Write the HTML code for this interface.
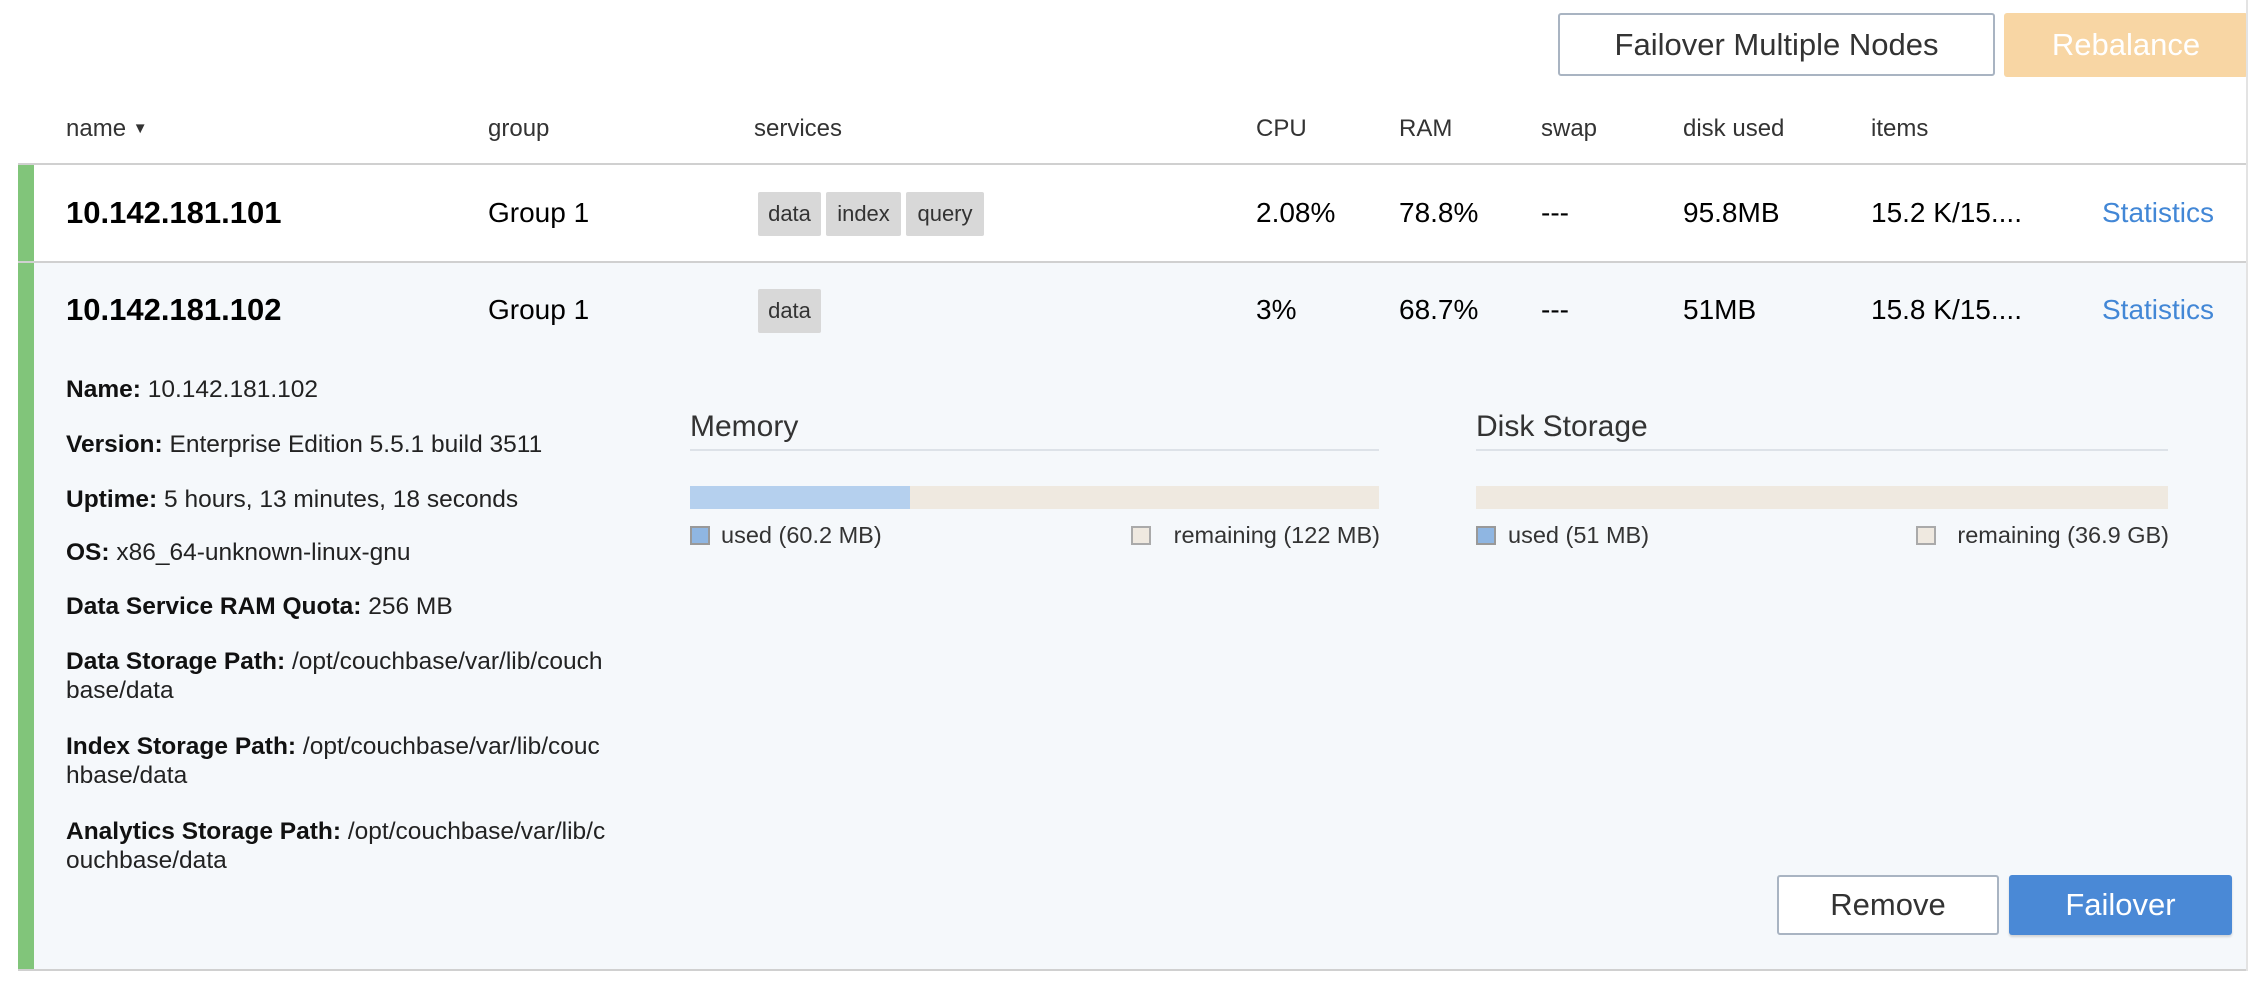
<!DOCTYPE html>
<html><head><meta charset="utf-8"><style>
*{margin:0;padding:0;box-sizing:border-box}
body{width:2253px;height:984px;background:#fff;font-family:"Liberation Sans",sans-serif;color:#000;position:relative;overflow:hidden}
.a{position:absolute;white-space:nowrap}
.h{font-size:24px;color:#333;top:114px;line-height:30px}
.c{font-size:28px;line-height:34px}
.ip{font-size:31px;font-weight:bold;line-height:36px}
.tag{position:absolute;background:#d8d8d8;border-radius:2px;font-size:22px;color:#333;height:44px;line-height:44px;text-align:center}
.stat{color:#4287d6}
.d{font-size:24.5px;line-height:29px;position:absolute;left:66px;width:640px;color:#222}
.d b{color:#111}
.lg{font-size:23.5px;line-height:28px;color:#333}
.btn{position:absolute;font-size:31px;text-align:center;border-radius:3px}
</style></head><body>
<div class="btn" style="left:1558px;top:13px;width:437px;height:63px;line-height:59px;border:2px solid #a9b4c2;color:#333">Failover Multiple Nodes</div>
<div class="btn" style="left:2004px;top:13px;width:244px;height:64px;line-height:64px;background:#f8d6a4;color:#fff">Rebalance</div>

<div class="a h" style="left:66px">name <span style="font-size:15px;position:relative;top:-3px">▼</span></div>
<div class="a h" style="left:488px">group</div>
<div class="a h" style="left:754px">services</div>
<div class="a h" style="left:1256px">CPU</div>
<div class="a h" style="left:1399px">RAM</div>
<div class="a h" style="left:1541px">swap</div>
<div class="a h" style="left:1683px">disk used</div>
<div class="a h" style="left:1871px">items</div>

<div class="a" style="left:18px;top:163px;width:2230px;height:2px;background:#d0d0d0"></div>
<div class="a" style="left:18px;top:165px;width:16px;height:805px;background:#81c57a"></div>
<div class="a" style="left:34px;top:263px;width:2212px;height:707px;background:#f5f8fb"></div>
<div class="a" style="left:18px;top:261px;width:2230px;height:2px;background:#d0d0d0"></div>
<div class="a" style="left:18px;top:969px;width:2230px;height:2px;background:#d0d0d0"></div>
<div class="a" style="left:2246px;top:0px;width:2px;height:971px;background:#e3e3e3"></div>

<div class="a ip" style="left:66px;top:195px">10.142.181.101</div>
<div class="a c" style="left:488px;top:196px">Group 1</div>
<div class="tag" style="left:758px;top:192px;width:63px">data</div>
<div class="tag" style="left:826px;top:192px;width:75px">index</div>
<div class="tag" style="left:906px;top:192px;width:78px">query</div>
<div class="a c" style="left:1256px;top:196px">2.08%</div>
<div class="a c" style="left:1399px;top:196px">78.8%</div>
<div class="a c" style="left:1541px;top:196px">---</div>
<div class="a c" style="left:1683px;top:196px">95.8MB</div>
<div class="a c" style="left:1871px;top:196px">15.2 K/15....</div>
<div class="a c stat" style="left:2102px;top:196px">Statistics</div>

<div class="a ip" style="left:66px;top:292px">10.142.181.102</div>
<div class="a c" style="left:488px;top:293px">Group 1</div>
<div class="tag" style="left:758px;top:289px;width:63px">data</div>
<div class="a c" style="left:1256px;top:293px">3%</div>
<div class="a c" style="left:1399px;top:293px">68.7%</div>
<div class="a c" style="left:1541px;top:293px">---</div>
<div class="a c" style="left:1683px;top:293px">51MB</div>
<div class="a c" style="left:1871px;top:293px">15.8 K/15....</div>
<div class="a c stat" style="left:2102px;top:293px">Statistics</div>

<div class="d" style="top:375px"><b>Name:</b> 10.142.181.102</div>
<div class="d" style="top:430px"><b>Version:</b> Enterprise Edition 5.5.1 build 3511</div>
<div class="d" style="top:485px"><b>Uptime:</b> 5 hours, 13 minutes, 18 seconds</div>
<div class="d" style="top:538px"><b>OS:</b> x86_64-unknown-linux-gnu</div>
<div class="d" style="top:592px"><b>Data Service RAM Quota:</b> 256 MB</div>
<div class="d" style="top:647px"><b>Data Storage Path:</b> /opt/couchbase/var/lib/couch<br>base/data</div>
<div class="d" style="top:732px"><b>Index Storage Path:</b> /opt/couchbase/var/lib/couc<br>hbase/data</div>
<div class="d" style="top:817px"><b>Analytics Storage Path:</b> /opt/couchbase/var/lib/c<br>ouchbase/data</div>

<div class="a" style="left:690px;top:410px;font-size:30px;line-height:34px;color:#333">Memory</div>
<div class="a" style="left:690px;top:449px;width:689px;height:2px;background:#dde2e8"></div>
<div class="a" style="left:690px;top:486px;width:689px;height:23px;background:#efe9e0"></div>
<div class="a" style="left:690px;top:486px;width:220px;height:23px;background:#b5d0ee"></div>
<div class="a" style="left:690px;top:526px;width:20px;height:19px;background:#8fb6e2;border:2px solid #999"></div>
<div class="a lg" style="left:721px;top:521px">used (60.2 MB)</div>
<div class="a" style="left:1131px;top:526px;width:20px;height:19px;background:#efe9e0;border:2px solid #aaa"></div>
<div class="a lg" style="left:1164px;top:521px;width:216px;text-align:right">remaining (122 MB)</div>

<div class="a" style="left:1476px;top:410px;font-size:30px;line-height:34px;color:#333">Disk Storage</div>
<div class="a" style="left:1476px;top:449px;width:692px;height:2px;background:#dde2e8"></div>
<div class="a" style="left:1476px;top:486px;width:692px;height:23px;background:#efe9e0"></div>
<div class="a" style="left:1476px;top:526px;width:20px;height:19px;background:#8fb6e2;border:2px solid #999"></div>
<div class="a lg" style="left:1508px;top:521px">used (51 MB)</div>
<div class="a" style="left:1916px;top:526px;width:20px;height:19px;background:#efe9e0;border:2px solid #aaa"></div>
<div class="a lg" style="left:1949px;top:521px;width:220px;text-align:right">remaining (36.9 GB)</div>

<div class="btn" style="left:1777px;top:875px;width:222px;height:60px;line-height:56px;border:2px solid #a9b4c2;background:#fff;color:#333">Remove</div>
<div class="btn" style="left:2009px;top:875px;width:223px;height:60px;line-height:60px;background:#4a89d6;color:#fff;box-shadow:0 2px 2px rgba(0,0,0,.15)">Failover</div>
</body></html>
